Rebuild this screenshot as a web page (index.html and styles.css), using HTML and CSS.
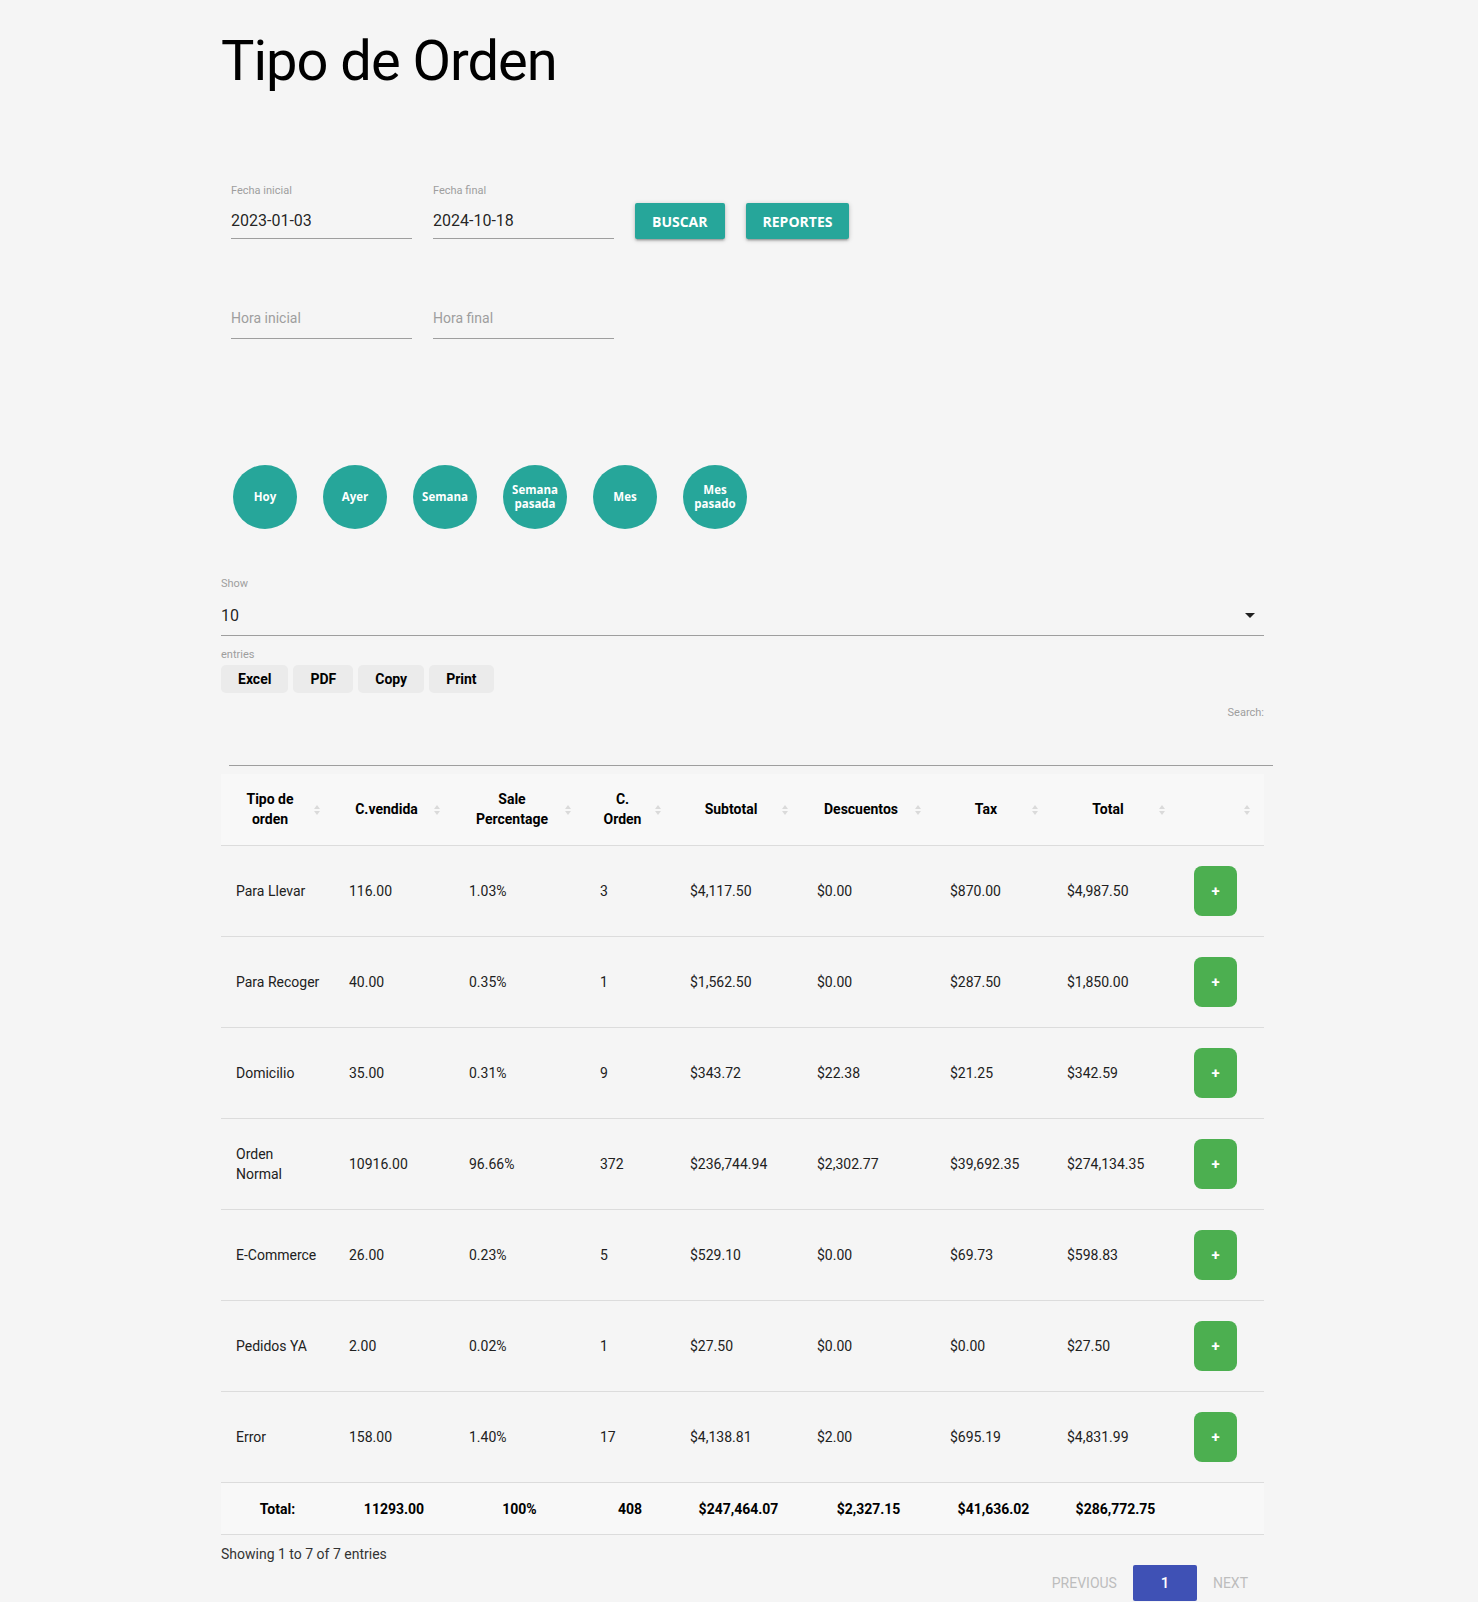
FILE: index.html
```html
<!DOCTYPE html>
<html lang="es">
<head>
    <meta charset="UTF-8">
    <meta name="viewport" content="width=device-width, initial-scale=1.0">
    <title>Tipo de Orden</title>
    <link rel="stylesheet" href="styles.css">
</head>
<body>
<div class="container">
    <h1>Tipo de Orden</h1>

    <div class="filter-row">
        <div class="field">
            <label for="fecha_inicial">Fecha inicial</label>
            <input type="text" id="fecha_inicial" value="2023-01-03">
        </div>
        <div class="field">
            <label for="fecha_final">Fecha final</label>
            <input type="text" id="fecha_final" value="2024-10-18">
        </div>
        <button type="button" class="btn">Buscar</button>
        <button type="button" class="btn">Reportes</button>
    </div>

    <div class="filter-row time-row">
        <div class="field">
            <input type="text" id="hora_inicial" placeholder="Hora inicial">
        </div>
        <div class="field">
            <input type="text" id="hora_final" placeholder="Hora final">
        </div>
    </div>

    <div class="quick-dates">
        <button type="button" class="btn-circle">Hoy</button>
        <button type="button" class="btn-circle">Ayer</button>
        <button type="button" class="btn-circle">Semana</button>
        <button type="button" class="btn-circle">Semana pasada</button>
        <button type="button" class="btn-circle">Mes</button>
        <button type="button" class="btn-circle">Mes pasado</button>
    </div>

    <div class="length-block">
        <div class="small-label">Show</div>
        <div class="select-box">
            <span>10</span>
            <span class="caret"></span>
        </div>
        <div class="small-label entries-label">entries</div>
    </div>

    <div class="export-buttons">
        <button type="button" class="btn-export">Excel</button>
        <button type="button" class="btn-export">PDF</button>
        <button type="button" class="btn-export">Copy</button>
        <button type="button" class="btn-export">Print</button>
    </div>

    <div class="search-block">
        <div class="small-label">Search:</div>
        <input type="search" class="search-input">
    </div>

    <table class="data-table">
        <colgroup>
            <col style="width: 113px">
            <col style="width: 120px">
            <col style="width: 131px">
            <col style="width: 90px">
            <col style="width: 127px">
            <col style="width: 133px">
            <col style="width: 117px">
            <col style="width: 127px">
            <col style="width: 85px">
        </colgroup>
        <thead>
        <tr>
            <th>Tipo de orden</th>
            <th>C.vendida</th>
            <th>Sale Percentage</th>
            <th>C. Orden</th>
            <th>Subtotal</th>
            <th>Descuentos</th>
            <th>Tax</th>
            <th>Total</th>
            <th></th>
        </tr>
        </thead>
        <tbody id="rows">
        <!-- filas generadas por script -->
        </tbody>
        <tfoot>
        <tr>
            <th>Total:</th>
            <th>11293.00</th>
            <th>100%</th>
            <th>408</th>
            <th>$247,464.07</th>
            <th>$2,327.15</th>
            <th>$41,636.02</th>
            <th>$286,772.75</th>
            <th></th>
        </tr>
        </tfoot>
    </table>

    <div class="table-info">Showing 1 to 7 of 7 entries</div>

    <div class="pagination">
        <a class="page-link disabled">Previous</a>
        <a class="page-link active">1</a>
        <a class="page-link disabled">Next</a>
    </div>
</div>

<script>
    // datos de la tabla
    const data = [
        ['Para Llevar', '116.00', '1.03%', '3', '$4,117.50', '$0.00', '$870.00', '$4,987.50'],
        ['Para Recoger', '40.00', '0.35%', '1', '$1,562.50', '$0.00', '$287.50', '$1,850.00'],
        ['Domicilio', '35.00', '0.31%', '9', '$343.72', '$22.38', '$21.25', '$342.59'],
        ['Orden Normal', '10916.00', '96.66%', '372', '$236,744.94', '$2,302.77', '$39,692.35', '$274,134.35'],
        ['E-Commerce', '26.00', '0.23%', '5', '$529.10', '$0.00', '$69.73', '$598.83'],
        ['Pedidos YA', '2.00', '0.02%', '1', '$27.50', '$0.00', '$0.00', '$27.50'],
        ['Error', '158.00', '1.40%', '17', '$4,138.81', '$2.00', '$695.19', '$4,831.99']
    ];

    const tbody = document.getElementById('rows');
    data.forEach(row => {
        const tr = document.createElement('tr');
        tr.innerHTML = row.map(value => `<td>${value}</td>`).join('') +
            '<td><button type="button" class="btn-detail">+</button></td>';
        tbody.appendChild(tr);
    });
</script>
</body>
</html>
```

FILE: styles.css
```css
body {
    margin: 0;
    background-color: #f5f5f5;
    font-family: Roboto, "Liberation Sans", sans-serif;
    color: rgba(0, 0, 0, 0.87);
}

.container {
    margin-left: 221px;
    width: 1043px;
}

h1 {
    margin: 29px 0 0;
    font-size: 56px;
    line-height: 64px;
    font-weight: 400;
    letter-spacing: -1px;
    color: #000;
}

.filter-row {
    display: flex;
    align-items: flex-end;
    gap: 21px;
    margin: 91px 0 0 10px;
}

.time-row {
    margin-top: 59px;
}

.field {
    width: 181px;
}

.field label {
    display: block;
    font-size: 11px;
    line-height: 14px;
    color: #9e9e9e;
}

.field input {
    display: block;
    width: 100%;
    height: 41px;
    box-sizing: border-box;
    padding: 4px 0 0;
    margin: 0;
    border: none;
    border-bottom: 1px solid #9e9e9e;
    background: transparent;
    font-family: Roboto, "Liberation Sans", sans-serif;
    font-size: 16px;
    color: rgba(0, 0, 0, 0.87);
    outline: none;
}

.time-row .field input {
    padding: 0;
    font-size: 14px;
}

.field input::placeholder {
    color: #9e9e9e;
}

.btn {
    height: 36px;
    padding: 0 17px;
    border: none;
    border-radius: 2px;
    background-color: #26a69a;
    color: #fff;
    font-family: "Open Sans", sans-serif;
    font-weight: 700;
    font-size: 14px;
    text-transform: uppercase;
    cursor: pointer;
    box-shadow: 0 2px 2px 0 rgba(0, 0, 0, 0.14), 0 3px 1px -2px rgba(0, 0, 0, 0.12), 0 1px 5px 0 rgba(0, 0, 0, 0.2);
}

.quick-dates {
    display: flex;
    gap: 26px;
    margin-top: 126px;
    padding-left: 12px;
}

.btn-circle {
    width: 64px;
    height: 64px;
    padding: 0 6px;
    border: none;
    border-radius: 50%;
    background-color: #26a69a;
    color: #fff;
    font-family: "Open Sans", sans-serif;
    font-weight: 700;
    font-size: 11.5px;
    line-height: 14px;
    cursor: pointer;
}

.length-block {
    margin-top: 48px;
}

.small-label {
    font-size: 11px;
    line-height: 14px;
    color: #9e9e9e;
}

.select-box {
    display: flex;
    align-items: center;
    justify-content: space-between;
    height: 45px;
    box-sizing: border-box;
    padding-top: 4px;
    border-bottom: 1px solid #9e9e9e;
    font-size: 16px;
}

.entries-label {
    margin-top: 12px;
}

.caret {
    width: 0;
    height: 0;
    margin-right: 9px;
    border-left: 5px solid transparent;
    border-right: 5px solid transparent;
    border-top: 5px solid #212121;
}

.export-buttons {
    display: flex;
    gap: 5px;
    margin-top: 3px;
}

.btn-export {
    height: 28px;
    padding: 0 17px;
    border: none;
    border-radius: 5px;
    background-color: #ebebeb;
    color: #000;
    font-family: Roboto, "Liberation Sans", sans-serif;
    font-weight: 700;
    font-size: 14px;
    cursor: pointer;
}

.search-block {
    margin-top: 13px;
}

.search-block .small-label {
    text-align: right;
}

.search-input {
    display: block;
    width: 1044px;
    height: 46px;
    box-sizing: border-box;
    margin: 0 0 0 8px;
    border: none;
    border-bottom: 1px solid #9e9e9e;
    background: transparent;
    outline: none;
}

.data-table {
    width: 1043px;
    margin-top: 8px;
    border-collapse: collapse;
    table-layout: fixed;
    font-size: 14px;
    line-height: 20px;
}

.data-table thead th {
    position: relative;
    padding: 15px 30px 16px 15px;
    background-color: #f8f8f8;
    border-bottom: 1px solid #dcdcdc;
    text-align: center;
    font-weight: 700;
    color: #000;
}

/* flechas de orden */
.data-table thead th::before,
.data-table thead th::after {
    content: "";
    position: absolute;
    right: 14px;
    border-left: 3px solid transparent;
    border-right: 3px solid transparent;
}

.data-table thead th::before {
    top: 31px;
    border-bottom: 4px solid #dadada;
}

.data-table thead th::after {
    top: 37px;
    border-top: 4px solid #dadada;
}

.data-table tbody td {
    padding: 20px 13px 20px 15px;
    border-bottom: 1px solid #dcdcdc;
    text-align: left;
    color: #212121;
}

.data-table tfoot th {
    padding: 16px 5px 15px;
    background-color: #f8f8f8;
    border-bottom: 1px solid #dcdcdc;
    text-align: center;
    font-weight: 700;
    color: #000;
}

.btn-detail {
    display: block;
    width: 43px;
    height: 50px;
    border: none;
    border-radius: 8px;
    background-color: #4caf50;
    color: #fff;
    font-family: Roboto, "Liberation Sans", sans-serif;
    font-weight: 700;
    font-size: 15px;
    cursor: pointer;
}

.table-info {
    margin-top: 9px;
    font-size: 14px;
    line-height: 20px;
    color: #333;
}

.pagination {
    display: flex;
    justify-content: flex-end;
    margin-top: 1px;
}

.page-link {
    height: 36px;
    padding: 0 16px;
    line-height: 36px;
    font-size: 14px;
    text-transform: uppercase;
    color: #bdbdbd;
}

.page-link.active {
    width: 64px;
    padding: 0;
    border-radius: 2px;
    text-align: center;
    background-color: #3f51b5;
    color: #fff;
    font-weight: 500;
    font-size: 15px;
}
```
